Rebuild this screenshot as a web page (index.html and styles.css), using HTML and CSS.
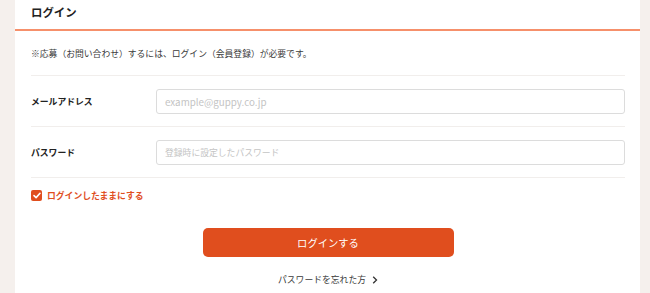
FILE: index.html
```html
<!DOCTYPE html>
<html lang="ja">
<head>
<meta charset="utf-8">
<link rel="stylesheet" href="styles.css">
</head>
<body>
<div class="page">
  <div class="card">
    <div class="card-head">ログイン</div>
    <div class="card-body">
      <p class="notice">※応募（お問い合わせ）するには、ログイン（会員登録）が必要です。</p>
      <div class="row">
        <div class="label">メールアドレス</div>
        <div class="field"><input class="input input-latin" type="text" placeholder="example@guppy.co.jp"></div>
      </div>
      <div class="row">
        <div class="label">パスワード</div>
        <div class="field"><input class="input" type="password" placeholder="登録時に設定したパスワード"></div>
      </div>
      <label class="keep">
        <span class="check"><svg width="8" height="7" viewBox="0 0 8 7"><path d="M1 3.6 L3.1 5.6 L7 1.3" fill="none" stroke="#fff" stroke-width="1.6" stroke-linecap="round" stroke-linejoin="round"/></svg></span>
        <span>ログインしたままにする</span>
      </label>
      <div class="actions">
        <button class="btn">ログインする</button>
        <a class="forgot">パスワードを忘れた方<svg width="6" height="8" viewBox="0 0 6 8"><path d="M1.2 0.8 L4.5 4 L1.2 7.2" fill="none" stroke="#333" stroke-width="1.3"/></svg></a>
      </div>
    </div>
  </div>
</div>
</body>
</html>
```
FILE: styles.css
```css
* { box-sizing: border-box; }
html, body { margin: 0; padding: 0; }
body {
  background: #f5f0ed;
  font-family: "Noto Sans CJK JP", "Noto Sans", sans-serif;
  color: #333;
  width: 650px;
  height: 293px;
  overflow: hidden;
}
.page {
  padding: 0 10px 0 15px;
}
.card {
  background: #fff;
  height: 293px;
}
.card-head {
  height: 31px;
  padding: 3px 16px 0;
  font-size: 11.4px;
  font-weight: 700;
  line-height: 18px;
  border-bottom: 2px solid #f6906b;
  color: #222;
}
.card-body {
  padding: 0 15px 0 16px;
}
.notice {
  margin: 0;
  font-size: 8.8px;
  line-height: 14px;
  padding: 16px 0 14px;
  border-bottom: 1px solid #f1eeec;
  color: #3a3a3a;
}
.row {
  display: flex;
  align-items: center;
  padding: 13px 0 12px;
  border-bottom: 1px solid #f1eeec;
}
.label {
  width: 125px;
  font-size: 8.8px;
  font-weight: 700;
  color: #222;
}
.field { flex: 1; }
.input {
  display: block;
  width: 100%;
  height: 25px;
  border: 1px solid #dcdcdc;
  border-radius: 3px;
  padding: 0 8px;
  font-family: "Noto Sans CJK JP", "Noto Sans", sans-serif;
  font-size: 8.8px;
  background: #fff;
  outline: none;
}
.input-latin { font-size: 9.8px; }
.input::placeholder { color: #c4c4c4; }
.keep {
  display: flex;
  align-items: center;
  gap: 5px;
  padding-top: 11px;
  font-size: 8.8px;
  font-weight: 700;
  color: #e04e1e;
}
.check {
  width: 11px;
  height: 11px;
  border-radius: 2px;
  background: #e04e1e;
  display: flex;
  align-items: center;
  justify-content: center;
}
.actions {
  display: flex;
  flex-direction: column;
  align-items: center;
  padding-top: 26px;
}
.btn {
  width: 251px;
  height: 29px;
  border: none;
  border-radius: 5px;
  background: #e04e1e;
  color: #fff;
  font-family: "Noto Sans CJK JP", "Noto Sans", sans-serif;
  font-size: 10.3px;
  padding: 0;
}
.forgot {
  margin-top: 16px;
  font-size: 8.8px;
  color: #3a3a3a;
  display: flex;
  align-items: center;
  gap: 6px;
}
```
